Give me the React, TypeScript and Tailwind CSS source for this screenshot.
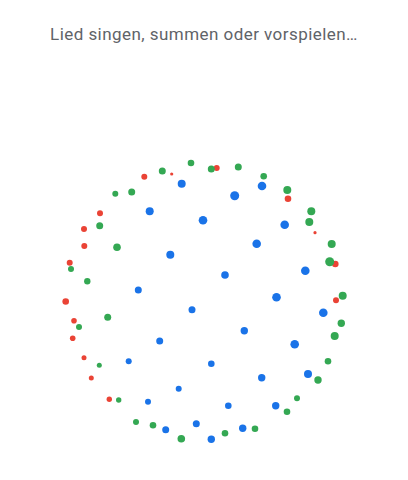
import React from 'react';

type Dot = [number, number, number, 'b' | 'g' | 'r'];

const colors = {
  b: '#1a73e8',
  g: '#34a853',
  r: '#ea4335',
};

// dot positions, in page coordinates
const dots: Dot[] = [
  [191, 163, 3.3, 'g'],
  [162.3, 171, 3.5, 'g'],
  [171.7, 174, 1.6, 'r'],
  [144.3, 176.7, 3, 'r'],
  [181.7, 183.7, 4, 'b'],
  [115.3, 193.7, 3, 'g'],
  [131.7, 192, 3.5, 'g'],
  [100, 213.3, 3, 'r'],
  [149.7, 211.3, 4, 'b'],
  [203, 220.2, 4.3, 'b'],
  [99.7, 225.7, 3.5, 'g'],
  [84, 229, 3, 'r'],
  [84.3, 246, 3, 'r'],
  [117, 247.3, 3.8, 'g'],
  [170.3, 254.7, 4, 'b'],
  [69.7, 262.7, 3, 'r'],
  [71, 269, 3, 'g'],
  [87.3, 281.3, 3.2, 'g'],
  [138.3, 290, 3.5, 'b'],
  [216.7, 168, 3, 'r'],
  [211.3, 169, 3.5, 'g'],
  [238.3, 167, 3.5, 'g'],
  [263.7, 176.3, 3.3, 'g'],
  [262, 186, 4.3, 'b'],
  [234.7, 195.7, 4.5, 'b'],
  [288, 198.7, 3.3, 'r'],
  [287.3, 190, 4, 'g'],
  [311.3, 211.3, 4, 'g'],
  [309.3, 222, 4, 'g'],
  [284.7, 224.7, 4.3, 'b'],
  [315, 232.7, 1.6, 'r'],
  [256.7, 243.7, 4.3, 'b'],
  [331.7, 244, 4, 'g'],
  [335.3, 264, 3.3, 'r'],
  [329.7, 261.7, 4.5, 'g'],
  [305.3, 270.7, 4.3, 'b'],
  [225, 275, 3.8, 'b'],
  [276.5, 297.2, 4.3, 'b'],
  [336, 300.3, 3, 'r'],
  [342.7, 295.8, 4, 'g'],
  [65.7, 301.5, 3.3, 'r'],
  [192, 309.7, 3.5, 'b'],
  [107.7, 317.3, 3.5, 'g'],
  [74, 320.7, 2.8, 'r'],
  [79, 327, 3, 'g'],
  [72.7, 338.3, 2.8, 'r'],
  [159.7, 341, 3.5, 'b'],
  [84, 357.7, 2.5, 'r'],
  [99.3, 365.3, 2.5, 'g'],
  [128.7, 361.3, 3, 'b'],
  [91.3, 378, 2.5, 'r'],
  [178.7, 388.7, 3, 'b'],
  [109.3, 399.3, 2.7, 'r'],
  [118.7, 400, 2.7, 'g'],
  [148, 401.7, 3, 'b'],
  [136, 422, 3, 'g'],
  [153, 425.3, 3.3, 'g'],
  [165.7, 429.7, 3.5, 'b'],
  [196.3, 423.7, 3.5, 'b'],
  [181.3, 438.7, 3.8, 'g'],
  [323.3, 312.7, 4.3, 'b'],
  [341.3, 323.3, 3.7, 'g'],
  [244.3, 330.7, 3.7, 'b'],
  [334.7, 336, 4, 'g'],
  [294.7, 344.3, 4.3, 'b'],
  [328, 361.3, 3.3, 'g'],
  [211.3, 363.7, 3.3, 'b'],
  [261.7, 377.7, 3.7, 'b'],
  [308, 374, 4, 'b'],
  [318, 380, 3.7, 'g'],
  [297, 398.3, 3, 'g'],
  [228.3, 405.7, 3.3, 'b'],
  [275.7, 405.7, 3.7, 'b'],
  [287, 411.7, 3.3, 'g'],
  [242.7, 428.3, 3.7, 'b'],
  [255, 428.7, 3.3, 'g'],
  [225, 433.3, 3.3, 'g'],
  [211.3, 439.3, 3.7, 'b'],
];

const App: React.FC = () => {
  return (
    <div className="w-[408px] h-[480px] bg-white flex flex-col items-center overflow-hidden">
      <p
        className="pt-[22px] text-[17px] leading-[24px] text-[#5f6368] tracking-[0.45px] whitespace-nowrap"
        style={{ fontFamily: 'Roboto, "Noto Sans", sans-serif' }}
      >
        Lied singen, summen oder vorspielen…
      </p>
      <svg
        className="mt-[104px] block"
        width={408}
        height={300}
        viewBox="0 150 408 300"
      >
        {dots.map(([x, y, r, c], i) => (
          <circle key={i} cx={x} cy={y} r={r} fill={colors[c]} />
        ))}
      </svg>
    </div>
  );
};

export default App;
